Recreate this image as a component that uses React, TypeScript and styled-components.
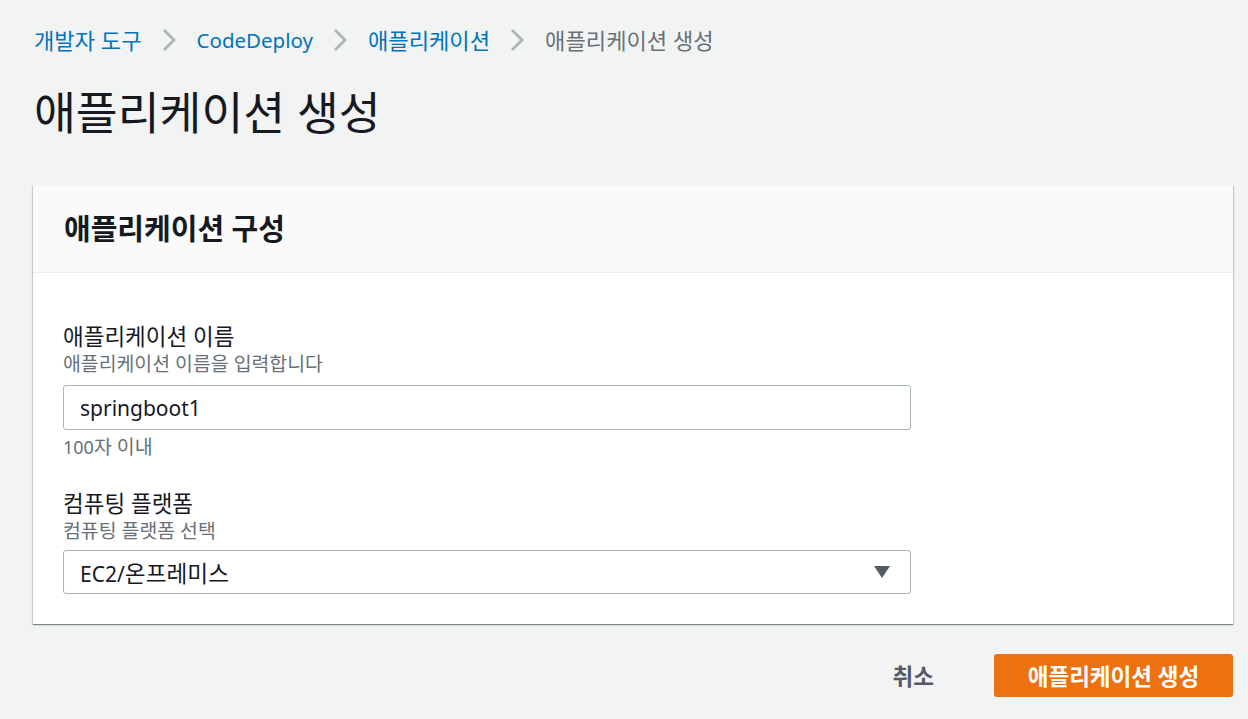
import styled, { createGlobalStyle } from 'styled-components';

const GlobalStyle = createGlobalStyle`
	html, body {
		margin: 0;
		padding: 0;
		background: #f2f3f3;
		font-family: "Noto Sans", "Noto Sans CJK KR", sans-serif;
		color: #16191f;
	}
`;

const Ko = styled.span`
	font-size: 1.08em;
`;

const Page = styled.div`
	padding: 25px 15px 0 33px;
	min-height: 694px;
`;

const Breadcrumbs = styled.nav`
	display: flex;
	align-items: center;
	height: 30px;
	font-size: 20.5px;
	padding-left: 1px;
`;

const Crumb = styled.a<{ $current?: boolean }>`
	color: ${p => (p.$current ? '#687078' : '#0073bb')};
	text-decoration: none;
	line-height: 30px;
	white-space: nowrap;
`;

const Chevron = styled.svg`
	width: 14px;
	height: 24px;
	margin: 0 21px 0 20px;
	flex: none;
`;

const Title = styled.h1`
	margin: 30px 0 0 1px;
	font-size: 45.5px;
	font-weight: 400;
	line-height: 54px;
	color: #16191f;
`;

const Card = styled.section`
	margin-top: 46px;
	background: #fff;
	box-shadow: 0 1px 1px 0 rgba(0, 28, 36, 0.3), 1px 1px 1px 0 rgba(0, 28, 36, 0.15), -1px 1px 1px 0 rgba(0, 28, 36, 0.15);
`;

const CardHeader = styled.header`
	display: flex;
	align-items: center;
	height: 87px;
	padding: 0 31px;
	background: #fafafa;
	border-bottom: 1px solid #eaeded;
`;

const CardTitle = styled.h2`
	margin: 0;
	font-size: 29px;
	font-weight: 700;
	line-height: 36px;
	color: #16191f;
`;

const CardBody = styled.div`
	padding: 50px 30px 30px 30px;
	display: flex;
	flex-direction: column;
	gap: 29px;
`;

const Field = styled.div`
	display: flex;
	flex-direction: column;
	width: 848px;
`;

const Label = styled.label`
	font-size: 22.5px;
	line-height: 27px;
	color: #16191f;
`;

const Description = styled.div`
	font-size: 19.4px;
	line-height: 27px;
	color: #687078;
`;

const Control = styled.div<{ $gap: number; $height: number }>`
	margin-top: ${p => p.$gap}px;
	box-sizing: border-box;
	height: ${p => p.$height}px;
	border: 1px solid #aab7b8;
	border-radius: 3px;
	background: #fff;
	display: flex;
	align-items: center;
	padding: 0 20px 0 16px;
	font-size: 21px;
	color: #16191f;
`;

const Value = styled.span`
	flex: 1;
	white-space: nowrap;
`;

const Constraint = styled.div`
	margin-top: 3px;
	font-size: 18px;
	line-height: 27px;
	color: #687078;
`;

const Actions = styled.div`
	display: flex;
	justify-content: flex-end;
	align-items: center;
	margin-top: 30px;
	gap: 32px;
`;

const Button = styled.button<{ $primary?: boolean }>`
	height: 43px;
	padding: 0 ${p => (p.$primary ? '30px' : '28px')};
	border: none;
	border-radius: 3px;
	font-family: inherit;
	font-size: 22.5px;
	font-weight: 700;
	cursor: pointer;
	background: ${p => (p.$primary ? '#ec7211' : 'transparent')};
	color: ${p => (p.$primary ? '#fff' : '#545b64')};
	width: ${p => (p.$primary ? '239px' : 'auto')};
`;

function ChevronIcon() {
	return (
		<Chevron viewBox="0 0 14 24">
			<path d="M2 2 L12 12 L2 22" fill="none" stroke="#aab7b8" strokeWidth="2.8" />
		</Chevron>
	);
}

export default function App() {
	return (
		<Page>
			<GlobalStyle />
			<Breadcrumbs>
				<Crumb href="#"><Ko>개발자 도구</Ko></Crumb>
				<ChevronIcon />
				<Crumb href="#">CodeDeploy</Crumb>
				<ChevronIcon />
				<Crumb href="#"><Ko>애플리케이션</Ko></Crumb>
				<ChevronIcon />
				<Crumb $current><Ko>애플리케이션 생성</Ko></Crumb>
			</Breadcrumbs>
			<Title>애플리케이션 생성</Title>
			<Card>
				<CardHeader>
					<CardTitle>애플리케이션 구성</CardTitle>
				</CardHeader>
				<CardBody>
					<Field>
						<Label>애플리케이션 이름</Label>
						<Description>애플리케이션 이름을 입력합니다</Description>
						<Control $gap={8} $height={45}>
							<Value>springboot1</Value>
						</Control>
						<Constraint>100<Ko>자 이내</Ko></Constraint>
					</Field>
					<Field>
						<Label>컴퓨팅 플랫폼</Label>
						<Description>컴퓨팅 플랫폼 선택</Description>
						<Control $gap={6} $height={44}>
							<Value>EC2/<Ko>온프레미스</Ko></Value>
							<svg width="16" height="13" viewBox="0 0 16 13">
								<path d="M0 0 H16 L8 12 Z" fill="#545b64" />
							</svg>
						</Control>
					</Field>
				</CardBody>
			</Card>
			<Actions>
				<Button>취소</Button>
				<Button $primary>애플리케이션 생성</Button>
			</Actions>
		</Page>
	);
}
